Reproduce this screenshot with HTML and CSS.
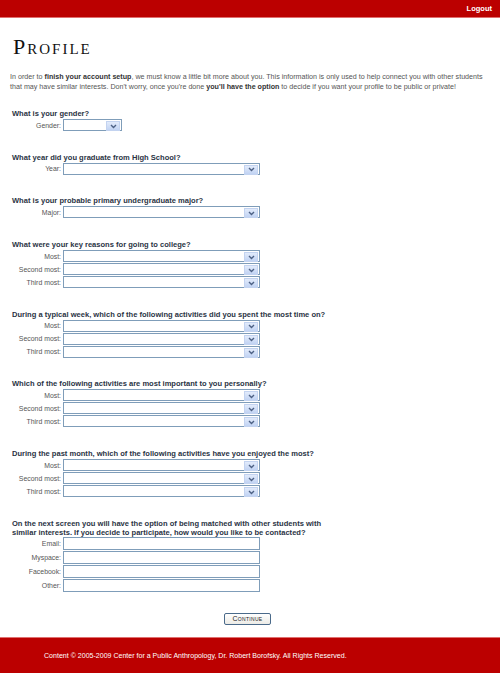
FILE: index.html
```html
<!DOCTYPE html>
<html>
<head>
<meta charset="utf-8">
<link rel="stylesheet" href="styles.css">
</head>
<body>
<div class="topbar"><a class="logout">Logout</a></div>
<main class="content">
  <h1 class="title">Profile</h1>
  <p class="intro">In order to <b>finish your account setup</b>, we must know a little bit more about you. This information is only used to help connect you with other students that may have similar interests. Don't worry, once you're done <b>you'll have the option</b> to decide if you want your profile to be public or private!</p>

  <section class="q">
    <h2>What is your gender?</h2>
    <div class="row"><label>Gender:</label><div class="select short"><span class="arrow"><svg width="7" height="5" viewBox="0 0 7 5"><path d="M1 1 L3.5 3.5 L6 1" fill="none" stroke="#4d6185" stroke-width="1.4"/></svg></span></div></div>
  </section>

  <section class="q">
    <h2>What year did you graduate from High School?</h2>
    <div class="row"><label>Year:</label><div class="select"><span class="arrow"><svg width="7" height="5" viewBox="0 0 7 5"><path d="M1 1 L3.5 3.5 L6 1" fill="none" stroke="#4d6185" stroke-width="1.4"/></svg></span></div></div>
  </section>

  <section class="q">
    <h2>What is your probable primary undergraduate major?</h2>
    <div class="row"><label>Major:</label><div class="select"><span class="arrow"><svg width="7" height="5" viewBox="0 0 7 5"><path d="M1 1 L3.5 3.5 L6 1" fill="none" stroke="#4d6185" stroke-width="1.4"/></svg></span></div></div>
  </section>

  <section class="q">
    <h2>What were your key reasons for going to college?</h2>
    <div class="row"><label>Most:</label><div class="select"><span class="arrow"><svg width="7" height="5" viewBox="0 0 7 5"><path d="M1 1 L3.5 3.5 L6 1" fill="none" stroke="#4d6185" stroke-width="1.4"/></svg></span></div></div>
    <div class="row"><label>Second most:</label><div class="select"><span class="arrow"><svg width="7" height="5" viewBox="0 0 7 5"><path d="M1 1 L3.5 3.5 L6 1" fill="none" stroke="#4d6185" stroke-width="1.4"/></svg></span></div></div>
    <div class="row"><label>Third most:</label><div class="select"><span class="arrow"><svg width="7" height="5" viewBox="0 0 7 5"><path d="M1 1 L3.5 3.5 L6 1" fill="none" stroke="#4d6185" stroke-width="1.4"/></svg></span></div></div>
  </section>

  <section class="q">
    <h2>During a typical week, which of the following activities did you spent the most time on?</h2>
    <div class="row"><label>Most:</label><div class="select"><span class="arrow"><svg width="7" height="5" viewBox="0 0 7 5"><path d="M1 1 L3.5 3.5 L6 1" fill="none" stroke="#4d6185" stroke-width="1.4"/></svg></span></div></div>
    <div class="row"><label>Second most:</label><div class="select"><span class="arrow"><svg width="7" height="5" viewBox="0 0 7 5"><path d="M1 1 L3.5 3.5 L6 1" fill="none" stroke="#4d6185" stroke-width="1.4"/></svg></span></div></div>
    <div class="row"><label>Third most:</label><div class="select"><span class="arrow"><svg width="7" height="5" viewBox="0 0 7 5"><path d="M1 1 L3.5 3.5 L6 1" fill="none" stroke="#4d6185" stroke-width="1.4"/></svg></span></div></div>
  </section>

  <section class="q">
    <h2>Which of the following activities are most important to you personally?</h2>
    <div class="row"><label>Most:</label><div class="select"><span class="arrow"><svg width="7" height="5" viewBox="0 0 7 5"><path d="M1 1 L3.5 3.5 L6 1" fill="none" stroke="#4d6185" stroke-width="1.4"/></svg></span></div></div>
    <div class="row"><label>Second most:</label><div class="select"><span class="arrow"><svg width="7" height="5" viewBox="0 0 7 5"><path d="M1 1 L3.5 3.5 L6 1" fill="none" stroke="#4d6185" stroke-width="1.4"/></svg></span></div></div>
    <div class="row"><label>Third most:</label><div class="select"><span class="arrow"><svg width="7" height="5" viewBox="0 0 7 5"><path d="M1 1 L3.5 3.5 L6 1" fill="none" stroke="#4d6185" stroke-width="1.4"/></svg></span></div></div>
  </section>

  <section class="q">
    <h2>During the past month, which of the following activities have you enjoyed the most?</h2>
    <div class="row"><label>Most:</label><div class="select"><span class="arrow"><svg width="7" height="5" viewBox="0 0 7 5"><path d="M1 1 L3.5 3.5 L6 1" fill="none" stroke="#4d6185" stroke-width="1.4"/></svg></span></div></div>
    <div class="row"><label>Second most:</label><div class="select"><span class="arrow"><svg width="7" height="5" viewBox="0 0 7 5"><path d="M1 1 L3.5 3.5 L6 1" fill="none" stroke="#4d6185" stroke-width="1.4"/></svg></span></div></div>
    <div class="row"><label>Third most:</label><div class="select"><span class="arrow"><svg width="7" height="5" viewBox="0 0 7 5"><path d="M1 1 L3.5 3.5 L6 1" fill="none" stroke="#4d6185" stroke-width="1.4"/></svg></span></div></div>
  </section>

  <section class="q contact">
    <h2>On the next screen you will have the option of being matched with other students with similar interests. If you decide to participate, how would you like to be contacted?</h2>
    <div class="row tall"><label>Email:</label><input class="text" type="text"></div>
    <div class="row tall"><label>Myspace:</label><input class="text" type="text"></div>
    <div class="row tall"><label>Facebook:</label><input class="text" type="text"></div>
    <div class="row tall"><label>Other:</label><input class="text" type="text"></div>
  </section>

  <div class="actions"><button class="continue">Continue</button></div>
</main>
<footer class="footer">Content © 2005-2009 Center for a Public Anthropology, Dr. Robert Borofsky. All Rights Reserved.</footer>
</body>
</html>
```

FILE: styles.css
```css
html, body {
  margin: 0;
  padding: 0;
  background: #fff;
}
body {
  font-family: "Liberation Sans", Arial, sans-serif;
  font-size: 7px;
  color: #444;
  width: 500px;
  height: 673px;
  display: flex;
  flex-direction: column;
  overflow: hidden;
}
.topbar {
  flex-shrink: 0;
  height: 17px;
  background: #bb0000;
  border-bottom: 1px solid #e07070;
  display: flex;
  align-items: center;
  justify-content: flex-end;
  padding-right: 8px;
}
.logout {
  color: #fff;
  font-weight: bold;
  font-size: 7.5px;
}
.content {
  flex: 1;
  padding: 0 10px;
}
.title {
  margin: 19px 0 0 3px;
  height: 20px;
  font-family: "Liberation Serif", "Times New Roman", serif;
  font-variant: small-caps;
  font-weight: normal;
  font-size: 22px;
  line-height: 20px;
  letter-spacing: 2px;
  color: #111;
}
.intro {
  margin: 15px 0 0 0;
  line-height: 10px;
  font-size: 7.15px;
  color: #555;
}
.intro b {
  color: #333;
}
.q {
  margin-top: 21.7px;
}
.q:first-of-type {
  margin-top: 17px;
}
.q h2 {
  margin: 0 0 0 2px;
  font-size: 7.55px;
  line-height: 10px;
  font-weight: bold;
  color: #2a3344;
}
.contact h2 {
  line-height: 9px;
  width: 310px;
  margin-bottom: 0.5px;
}
.row {
  display: flex;
  align-items: center;
  height: 12px;
  margin-bottom: 1px;
}
.row.tall {
  height: 13px;
}
.row label {
  width: 51px;
  text-align: right;
  color: #555;
  font-size: 6.9px;
  margin-right: 2px;
}
.select {
  box-sizing: border-box;
  width: 197px;
  height: 12px;
  border: 1px solid #7f9db9;
  background: #fff;
  display: flex;
  justify-content: flex-end;
  padding: 1px;
}
.select.short {
  width: 59px;
}
.arrow {
  width: 12px;
  height: 8px;
  background: linear-gradient(#e2ebfb, #c1d3f3);
  border: 1px solid #c3d3f0;
  display: flex;
  align-items: center;
  justify-content: center;
}
.text {
  box-sizing: border-box;
  width: 197px;
  height: 13px;
  border: 1px solid #7f9db9;
  padding: 0;
  margin: 0;
  background: #fff;
}
.actions {
  display: flex;
  justify-content: center;
  margin-top: 21px;
  padding-right: 5px;
}
.continue {
  box-sizing: border-box;
  width: 47px;
  height: 12px;
  padding: 0;
  border: 1px solid #4a6a8a;
  border-radius: 2px;
  background: linear-gradient(#ffffff, #ecebe6);
  font-family: "Liberation Sans", Arial, sans-serif;
  font-variant: small-caps;
  font-size: 7px;
  line-height: 10px;
  color: #222;
  letter-spacing: 0.3px;
}
.footer {
  flex-shrink: 0;
  box-sizing: border-box;
  height: 36px;
  background: #bb0000;
  border-top: 1px solid #e07070;
  color: #fff;
  font-size: 7.05px;
  padding-left: 44px;
  display: flex;
  align-items: center;
}
```
